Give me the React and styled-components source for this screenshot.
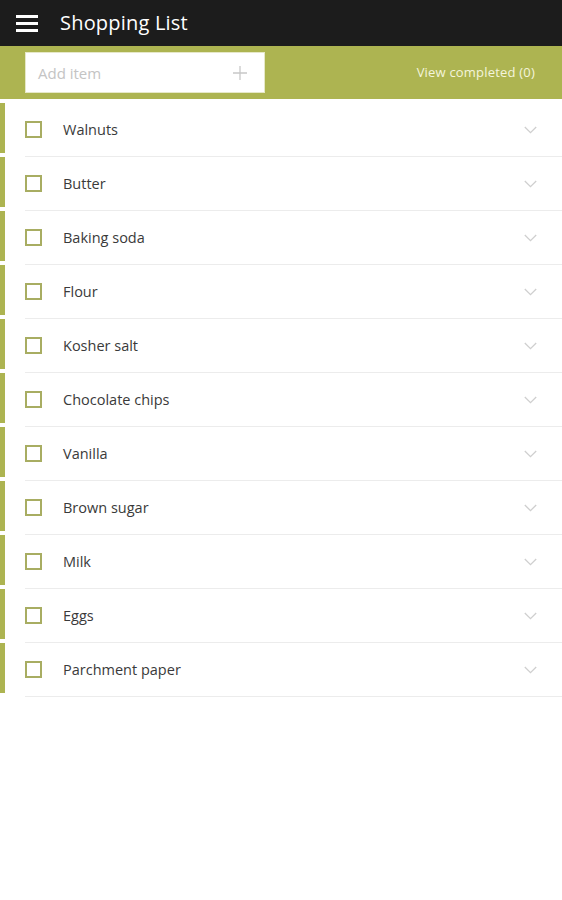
import React from 'react';
import styled, { createGlobalStyle } from 'styled-components';

const items = [
  'Walnuts',
  'Butter',
  'Baking soda',
  'Flour',
  'Kosher salt',
  'Chocolate chips',
  'Vanilla',
  'Brown sugar',
  'Milk',
  'Eggs',
  'Parchment paper',
];

const GlobalStyle = createGlobalStyle`
  body {
    margin: 0;
    background: #fff;
    font-family: "Open Sans", "Noto Sans", sans-serif;
  }
`;

const App = () => (
  <Page>
    <GlobalStyle />
    <Header>
      <Menu aria-label="menu">
        <span />
        <span />
        <span />
      </Menu>
      <Title>Shopping List</Title>
    </Header>
    <Toolbar>
      <AddBox>
        <AddText>Add item</AddText>
        <PlusIcon width="14" height="14" viewBox="0 0 14 14">
          <path d="M7 0v14M0 7h14" stroke="#c8c8c8" strokeWidth="1.3" fill="none" />
        </PlusIcon>
      </AddBox>
      <Completed>View completed (0)</Completed>
    </Toolbar>
    <List>
      {items.map(name => (
        <Item key={name}>
          <Accent />
          <Content>
            <Check />
            <Name>{name}</Name>
            <Chevron width="13" height="8" viewBox="0 0 13 8">
              <path d="M0.8 1l5.7 5.6L12.2 1" stroke="#cfcfcf" strokeWidth="1.3" fill="none" />
            </Chevron>
          </Content>
        </Item>
      ))}
    </List>
  </Page>
);

const Page = styled.div`
  width: 562px;
  min-height: 900px;
  background: #fff;
`;

const Header = styled.header`
  display: flex;
  align-items: center;
  height: 46px;
  background: #1c1c1c;
  padding-left: 16px;
`;

const Menu = styled.div`
  display: flex;
  flex-direction: column;
  gap: 4px;
  width: 22px;
  margin-right: 22px;

  span {
    display: block;
    height: 3px;
    background: #fff;
  }
`;

const Title = styled.h1`
  margin: 0 0 2px;
  color: #fff;
  font-size: 20px;
  font-weight: 400;
  letter-spacing: 0.2px;
`;

const Toolbar = styled.div`
  display: flex;
  align-items: center;
  justify-content: space-between;
  height: 53px;
  background: #adb451;
  padding: 0 27px 0 25px;
  box-sizing: border-box;
`;

const AddBox = styled.div`
  display: flex;
  align-items: center;
  justify-content: space-between;
  width: 240px;
  height: 41px;
  box-sizing: border-box;
  background: #fff;
  border: 1px solid #e6e8c8;
  padding: 0 17px 0 12px;
`;

const AddText = styled.span`
  color: #c4c4c4;
  font-size: 15px;
`;

const PlusIcon = styled.svg`
  display: block;
`;

const Completed = styled.span`
  color: #f4f4dc;
  font-size: 13px;
  letter-spacing: 0.2px;
  margin-bottom: 2px;
`;

const List = styled.ul`
  list-style: none;
  margin: 0;
  padding: 4px 0 0;
`;

const Item = styled.li`
  display: flex;
  align-items: flex-start;
  height: 54px;
`;

const Accent = styled.div`
  width: 5px;
  height: 50px;
  background: #adb451;
  flex-shrink: 0;
`;

const Content = styled.div`
  flex: 1;
  display: flex;
  align-items: center;
  height: 53px;
  margin-left: 20px;
  padding-right: 25px;
  border-bottom: 1px solid #ececec;
`;

const Check = styled.span`
  width: 17px;
  height: 17px;
  box-sizing: border-box;
  border: 2px solid #a8ad62;
  flex-shrink: 0;
  margin-top: -1px;
`;

const Name = styled.span`
  flex: 1;
  margin-left: 21px;
  color: #3a3a3a;
  font-size: 14.5px;
  margin-bottom: 1px;
`;

const Chevron = styled.svg`
  display: block;
`;

export default App;
